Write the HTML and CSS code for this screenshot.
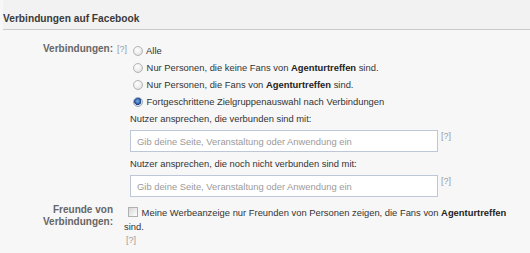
FILE: index.html
```html
<!DOCTYPE html>
<html lang="de">
<head>
  <meta charset="UTF-8" />
  <title>Verbindungen auf Facebook</title>
  <link rel="stylesheet" href="styles.css">
</head>
<body>
  <div class="section-head">Verbindungen auf Facebook</div>

  <div class="form">
    <div class="row">
      <div class="label">Verbindungen:</div>
      <div class="help help-label">[?]</div>
      <div class="field">
        <label class="option"><input type="radio" name="conn"> Alle</label>
        <label class="option"><input type="radio" name="conn"> Nur Personen, die keine Fans von <b>Agenturtreffen</b> sind.</label>
        <label class="option"><input type="radio" name="conn"> Nur Personen, die Fans von <b>Agenturtreffen</b> sind.</label>
        <label class="option"><input type="radio" name="conn" checked> Fortgeschrittene Zielgruppenauswahl nach Verbindungen</label>

        <div class="target">
          <div class="target-title">Nutzer ansprechen, die verbunden sind mit:</div>
          <div class="target-line">
            <input class="text-input" type="text" placeholder="Gib deine Seite, Veranstaltung oder Anwendung ein">
            <span class="help">[?]</span>
          </div>
        </div>

        <div class="target">
          <div class="target-title">Nutzer ansprechen, die noch nicht verbunden sind mit:</div>
          <div class="target-line">
            <input class="text-input" type="text" placeholder="Gib deine Seite, Veranstaltung oder Anwendung ein">
            <span class="help">[?]</span>
          </div>
        </div>
      </div>
    </div>

    <div class="row row-friends">
      <div class="label">Freunde von<br>Verbindungen:</div>
      <div class="field field-friends">
        <label class="check"><input type="checkbox"> Meine Werbeanzeige nur Freunden von Personen zeigen, die Fans von <b>Agenturtreffen</b> sind.</label>
        <div class="help help-below">[?]</div>
      </div>
    </div>
  </div>
</body>
</html>
```

FILE: styles.css
```css
body {
  margin: 0;
  background-color: #f7f7f7;
  font-family: 'Liberation Sans', Arial, sans-serif;
  font-size: 9.4px;
  color: #333;
}

b {
  color: #222;
}

.section-head {
  background-color: #f2f2f2;
  margin-left: 3px;
  padding: 12px 0 3px 0;
  line-height: 14px;
  font-size: 10.2px;
  font-weight: bold;
  color: #3a3a3a;
  border-bottom: 1px solid #c9c9c9;
}

.form {
  padding-top: 12px;
}

.row {
  display: flex;
  align-items: flex-start;
}

.label {
  width: 113px;
  flex-shrink: 0;
  text-align: right;
  font-size: 10px;
  font-weight: bold;
  color: #666;
  line-height: 14px;
}

.help {
  color: #9a9a9a;
  font-size: 9px;
  line-height: 14px;
}

.help-label {
  width: 10px;
  padding-left: 4px;
}

.field {
  flex: 1;
  padding-left: 3px;
}

.option {
  display: block;
  height: 17px;
  line-height: 17px;
  margin-left: 3px;
  white-space: nowrap;
}

.option input {
  appearance: none;
  width: 10px;
  height: 10px;
  margin: 0 1px 0 0;
  vertical-align: -2px;
  border: 1px solid #b5b5b5;
  border-radius: 50%;
  background: radial-gradient(circle at 40% 35%, #ffffff 0%, #ededed 55%, #d0d0d0 100%);
}

.option input:checked {
  border-color: #9aa7ba;
  background: radial-gradient(circle at 45% 40%, #86b0e6 0%, #2f62ad 40%, #1d3f76 55%, #d8d8d8 60%, #f0f0f0 100%);
}

.target {
  margin-top: 2px;
}

.target + .target {
  margin-top: 5px;
}

.target-title {
  line-height: 14px;
  margin-bottom: 4px;
}

.target-line {
  display: flex;
  align-items: flex-start;
  gap: 3px;
}

.text-input {
  width: 308px;
  height: 22px;
  box-sizing: border-box;
  margin: 0;
  padding: 0 6px;
  border: 1px solid #bdc7d8;
  background: #fff;
  font-family: inherit;
  font-size: 9.4px;
  color: #333;
}

.text-input::placeholder {
  color: #9a9a9a;
}

.target-line .help {
  line-height: 13px;
}

.row-friends {
  margin-top: 7px;
}

.row-friends .label {
  line-height: 12px;
}

.field-friends {
  flex: none;
  width: 396px;
  padding-left: 11px;
  padding-top: 2px;
  line-height: 14px;
}

.check {
  display: block;
}

.check input {
  appearance: none;
  width: 10px;
  height: 10px;
  margin: 0 1px 0 4px;
  vertical-align: -1px;
  border: 1px solid #b0b0b0;
  background: linear-gradient(135deg, #d6d6d6, #ffffff);
}

.help-below {
  padding-left: 2px;
  line-height: 12px;
}
```
